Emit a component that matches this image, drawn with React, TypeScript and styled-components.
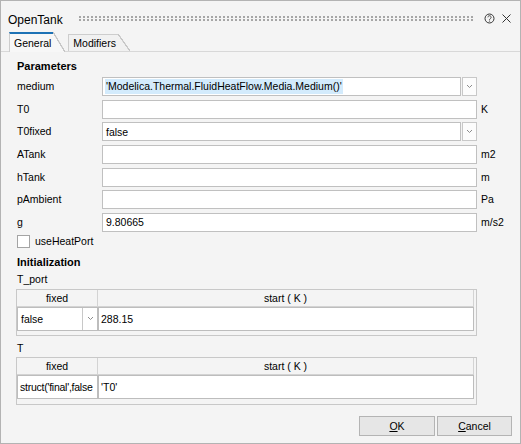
import React from 'react';
import styled, { createGlobalStyle } from 'styled-components';

const GlobalStyle = createGlobalStyle`
  html, body { margin: 0; padding: 0; background: #f4f4f4; }
  body {
    font-family: "Liberation Sans", Arial, sans-serif;
    font-size: 10.5px;
    color: #000;
  }
  * { box-sizing: border-box; }
`;

const Window = styled.div`
  width: 521px;
  height: 444px;
  border: 1px solid #b3b3b3;
  background: #f4f4f4;
  display: flex;
  flex-direction: column;
  overflow: hidden;
`;

const TitleBar = styled.div`
  height: 30px;
  flex: none;
  display: flex;
  align-items: center;
  padding: 5px 9px 0 7px;
`;

const Title = styled.span`
  font-size: 12px;
  line-height: 14px;
  margin-top: 2px;
`;

const Grip = styled.div`
  flex: 1;
  height: 5px;
  margin: 0 11px 0 16px;
  background: repeating-linear-gradient(to right, #a6a6a6 0 2px, transparent 2px 4px);
  -webkit-mask-image: linear-gradient(to bottom, #000 0 2px, transparent 2px 3px, #000 3px 5px);
  mask-image: linear-gradient(to bottom, #000 0 2px, transparent 2px 3px, #000 3px 5px);
`;

const IconBox = styled.span<{ $gap?: number }>`
  display: inline-flex;
  margin-right: ${(p) => p.$gap ?? 0}px;
`;

const TabBar = styled.div`
  height: 20px;
  flex: none;
  display: flex;
  align-items: flex-end;
  padding-left: 8px;
`;

const Tab = styled.div<{ $active?: boolean }>`
  position: relative;
  height: ${(p) => (p.$active ? 20 : 17)}px;
  padding: 0 2px 0 4px;
  margin-right: 15px;
  display: flex;
  align-items: center;
  background: ${(p) => (p.$active ? '#f7f7f7' : '#f1f1f1')};
  border-left: 1px solid #cdcdcd;
  border-top: ${(p) => (p.$active ? '2px solid #1d72b5' : '1px solid #cdcdcd')};
  z-index: ${(p) => (p.$active ? 2 : 1)};
  margin-bottom: ${(p) => (p.$active ? -1 : 0)}px;
  &::after {
    content: '';
    position: absolute;
    top: ${(p) => (p.$active ? -2 : -1)}px;
    bottom: 0;
    right: -12px;
    width: 12px;
    background: linear-gradient(
      to top right,
      ${(p) => (p.$active ? '#f7f7f7' : '#f1f1f1')} calc(50% - 0.8px),
      #c6c6c6 calc(50% - 0.5px),
      #c6c6c6 calc(50% + 0.5px),
      transparent calc(50% + 0.8px)
    );
  }
`;

const Pane = styled.div`
  flex: 1;
  border-top: 1px solid #d8d8d8;
  padding: 6px 8px 7px 15px;
  display: flex;
  flex-direction: column;
`;

const Heading = styled.div<{ $mt?: number }>`
  font-weight: bold;
  font-size: 11px;
  line-height: 16px;
  height: 16px;
  margin-top: ${(p) => p.$mt ?? 0}px;
  padding-left: 1px;
`;

const FormGrid = styled.div`
  display: grid;
  grid-template-columns: 86px 375px 1fr;
  grid-auto-rows: 19px;
  row-gap: 3.67px;
  margin-top: 3px;
  align-items: center;
`;

const Label = styled.div`
  line-height: 19px;
  padding-left: 1px;
  white-space: nowrap;
`;

const Unit = styled.div`
  line-height: 19px;
  padding-left: 4px;
  white-space: nowrap;
`;

const Field = styled.div`
  height: 19px;
  border: 1px solid #c0c0c0;
  background: #fff;
  padding-left: 3px;
  display: flex;
  align-items: center;
  white-space: nowrap;
  overflow: hidden;
`;

const Combo = styled.div`
  display: flex;
  gap: 1px;
  height: 19px;
`;

const ComboField = styled(Field)`
  flex: 1;
`;

const ComboButton = styled.div`
  width: 15px;
  height: 19px;
  border: 1px solid #c8c8c8;
  background: #fcfcfc;
  display: flex;
  align-items: center;
  justify-content: center;
`;

const Selected = styled.span`
  background: #d3ebfc;
  line-height: 15px;
  padding: 0 1px;
  margin-left: -1px;
`;

const CheckRow = styled.label`
  display: flex;
  align-items: center;
  gap: 5px;
  height: 15px;
  margin-top: 2px;
  padding-left: 1px;
`;

const CheckBox = styled.span`
  width: 13px;
  height: 13px;
  border: 1px solid #a4a4a4;
  background: #fff;
`;

const SubLabel = styled.div<{ $mt?: number }>`
  line-height: 14px;
  height: 14px;
  margin-top: ${(p) => p.$mt ?? 0}px;
  padding-left: 1px;
`;

const Table = styled.div<{ $mt?: number; $h?: number }>`
  width: 461px;
  height: ${(p) => p.$h ?? 47}px;
  margin-top: ${(p) => p.$mt ?? 0}px;
  border: 1px solid #c8c8c8;
  background: #f4f4f4;
  display: grid;
  grid-template-columns: 81px 376px;
  grid-template-rows: 17px 24px;
  align-content: start;
`;

const HeadCell = styled.div`
  border-right: 1px solid #d3d3d3;
  border-bottom: 1px solid #d3d3d3;
  background: #f4f4f4;
  display: flex;
  align-items: center;
  justify-content: center;
  white-space: pre;
`;

const Cell = styled.div<{ $pad?: number; $tight?: boolean }>`
  background: #fff;
  border: 1px solid #bdbdbd;
  display: flex;
  align-items: center;
  padding-left: ${(p) => p.$pad ?? 3}px;
  white-space: nowrap;
  overflow: hidden;
  letter-spacing: ${(p) => (p.$tight ? '-0.25px' : 'normal')};
`;

const CellSelect = styled(Cell)`
  padding-left: 0;
`;

const CellSelectText = styled.span`
  flex: 1;
  padding-left: 3px;
`;

const CellSelectButton = styled.span`
  width: 15px;
  align-self: stretch;
  border-left: 1px solid #c8c8c8;
  display: flex;
  align-items: center;
  justify-content: center;
`;

const Footer = styled.div`
  margin-top: auto;
  display: flex;
  justify-content: flex-end;
  gap: 2px;
`;

const Button = styled.button<{ $w?: number }>`
  width: ${(p) => p.$w ?? 75}px;
  height: 20px;
  border: 1px solid #b4b4b4;
  background: #e6e6e6;
  font-family: inherit;
  font-size: 10.5px;
  color: #000;
  padding: 0;
  border-radius: 0;
`;

const Chevron = () => (
  <svg width="7" height="5" viewBox="0 0 7 5">
    <polyline points="1,1 3.5,3.5 6,1" fill="none" stroke="#8c8c8c" strokeWidth="1" />
  </svg>
);

const HelpIcon = () => (
  <svg width="11" height="11" viewBox="0 0 11 11">
    <circle cx="5.5" cy="5.5" r="4.5" fill="none" stroke="#333" strokeWidth="1" />
    <path d="M3.9 4.3a1.6 1.6 0 1 1 2.4 1.4c-0.5 0.3-0.8 0.6-0.8 1.2" fill="none" stroke="#333" strokeWidth="0.9" />
    <circle cx="5.5" cy="8" r="0.6" fill="#333" />
  </svg>
);

const CloseIcon = () => (
  <svg width="9" height="9" viewBox="0 0 9 9">
    <path d="M0.5 0.5L8.5 8.5M8.5 0.5L0.5 8.5" stroke="#333" strokeWidth="1" />
  </svg>
);

type Row = { label: string; kind: 'text' | 'combo'; value?: string; unit?: string; selected?: boolean };

const rows: Row[] = [
  { label: 'medium', kind: 'combo', value: "'Modelica.Thermal.FluidHeatFlow.Media.Medium()'", selected: true },
  { label: 'T0', kind: 'text', unit: 'K' },
  { label: 'T0fixed', kind: 'combo', value: 'false' },
  { label: 'ATank', kind: 'text', unit: 'm2' },
  { label: 'hTank', kind: 'text', unit: 'm' },
  { label: 'pAmbient', kind: 'text', unit: 'Pa' },
  { label: 'g', kind: 'text', value: '9.80665', unit: 'm/s2' },
];

export default function App() {
  return (
    <>
      <GlobalStyle />
      <Window>
        <TitleBar>
          <Title>OpenTank</Title>
          <Grip />
          <IconBox $gap={7}>
            <HelpIcon />
          </IconBox>
          <IconBox>
            <CloseIcon />
          </IconBox>
        </TitleBar>
        <TabBar>
          <Tab $active>General</Tab>
          <Tab>Modifiers</Tab>
        </TabBar>
        <Pane>
          <Heading>Parameters</Heading>
          <FormGrid>
            {rows.map((r) => (
              <React.Fragment key={r.label}>
                <Label>{r.label}</Label>
                {r.kind === 'combo' ? (
                  <Combo>
                    <ComboField>{r.selected ? <Selected>{r.value}</Selected> : r.value}</ComboField>
                    <ComboButton>
                      <Chevron />
                    </ComboButton>
                  </Combo>
                ) : (
                  <Field>{r.value}</Field>
                )}
                <Unit>{r.unit ?? ''}</Unit>
              </React.Fragment>
            ))}
          </FormGrid>
          <CheckRow>
            <CheckBox />
            useHeatPort
          </CheckRow>
          <Heading $mt={5}>Initialization</Heading>
          <SubLabel $mt={2}>T_port</SubLabel>
          <Table $mt={3}>
            <HeadCell>fixed</HeadCell>
            <HeadCell>start ( K )</HeadCell>
            <CellSelect>
              <CellSelectText>false</CellSelectText>
              <CellSelectButton>
                <Chevron />
              </CellSelectButton>
            </CellSelect>
            <Cell $pad={2}>288.15</Cell>
          </Table>
          <SubLabel $mt={5}>T</SubLabel>
          <Table $mt={2} $h={48}>
            <HeadCell>fixed</HeadCell>
            <HeadCell>start ( K )</HeadCell>
            <Cell $pad={2} $tight>struct('final',false</Cell>
            <Cell $pad={2}>'T0'</Cell>
          </Table>
          <Footer>
            <Button $w={76}>
              <u>O</u>K
            </Button>
            <Button $w={75}>
              <u>C</u>ancel
            </Button>
          </Footer>
        </Pane>
      </Window>
    </>
  );
}
